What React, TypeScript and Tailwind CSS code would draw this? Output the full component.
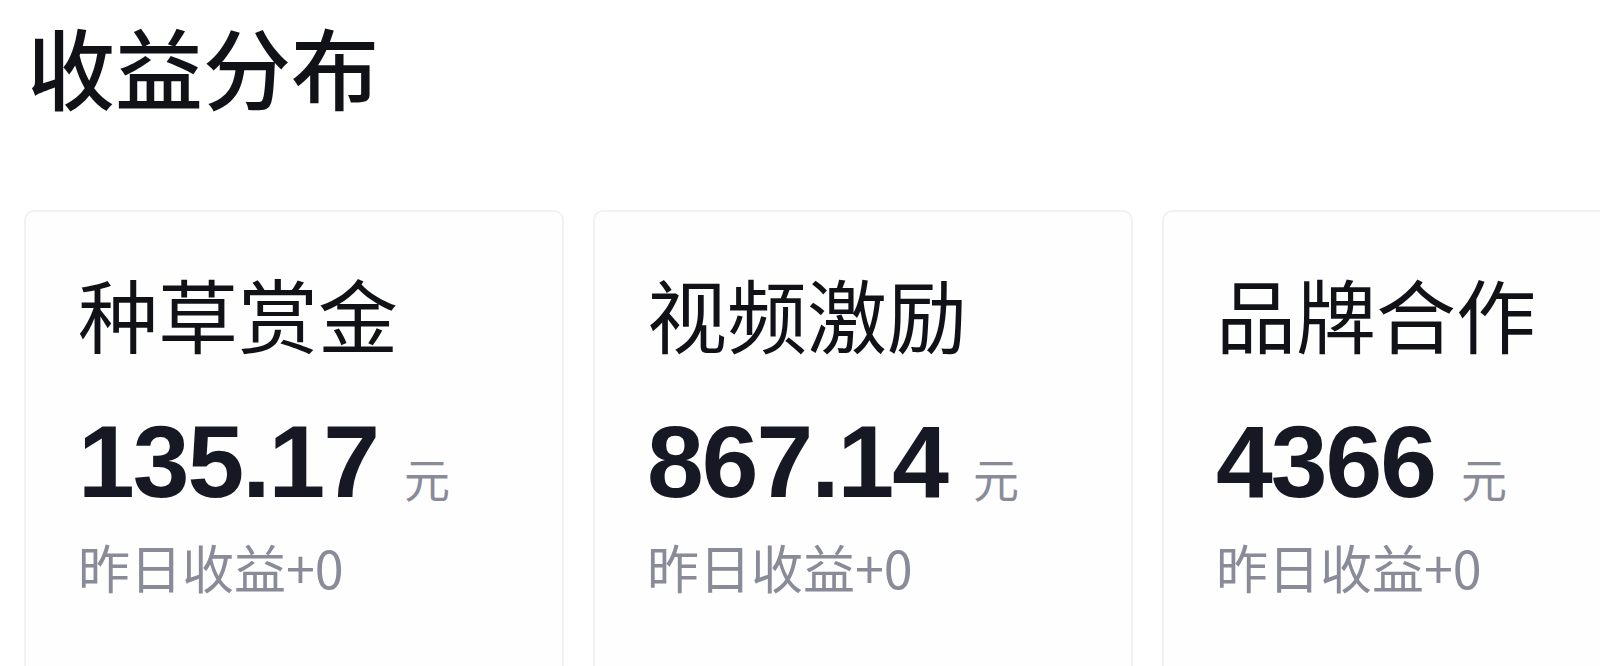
const cards = [
  { title: "种草赏金", amount: "135.17", delta: "昨日收益+0" },
  { title: "视频激励", amount: "867.14", delta: "昨日收益+0" },
  { title: "品牌合作", amount: "4366", delta: "昨日收益+0" },
];

const cjk = "font-['Noto_Sans_CJK_SC','Noto_Sans',sans-serif]";

export default function App() {
  return (
    <main className={`h-[666px] w-[1600px] overflow-hidden bg-white ${cjk}`}>
      <h1 className="pl-[27px] pt-[21px] text-[88px] font-medium leading-none text-[#111218]">
        收益分布
      </h1>

      <section className="mt-[101px] flex gap-[29px] pl-[24px]">
        {cards.map((card) => (
          <article
            key={card.title}
            className="h-[520px] w-[540px] shrink-0 rounded-[10px] border-2 border-[#f1f1f4] bg-[#fefefe] pl-[52px] pt-[60px]"
          >
            <p className="text-[80px] leading-none text-[#111218]">{card.title}</p>
            <div className="mt-[59px] flex items-baseline">
              <span className="font-['Liberation_Sans',sans-serif] text-[102px] font-bold leading-none tracking-[-2px] text-[#161823]">
                {card.amount}
              </span>
              <span className="ml-[26px] text-[46px] leading-none text-[#8a8b99]">元</span>
            </div>
            <p className="mt-[28px] text-[52px] leading-none text-[#8a8b99]">{card.delta}</p>
          </article>
        ))}
      </section>
    </main>
  );
}
